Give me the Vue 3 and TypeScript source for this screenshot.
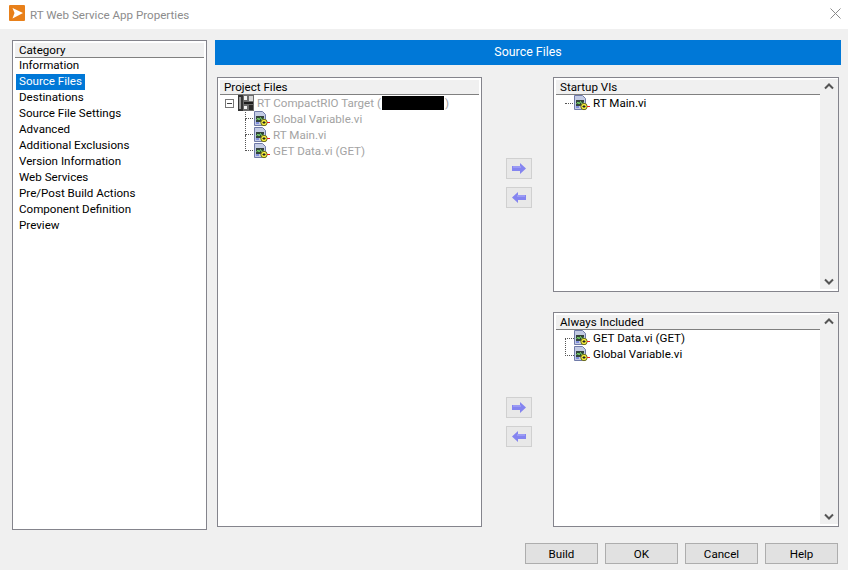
<template>
  <div class="dialog">
    <!-- Title bar -->
    <header class="titlebar">
      <svg class="app-icon" width="16" height="16" viewBox="0 0 16 16">
        <rect width="16" height="16" rx="1" fill="#e8801a" />
        <path d="M3.5 3 L14 8 L3.5 13.5 L5.5 8 Z" fill="#fff" />
      </svg>
      <span class="title">RT Web Service App Properties</span>
      <svg class="close" width="11" height="11" viewBox="0 0 11 11">
        <path d="M.5 .5 L10.5 10.5 M10.5 .5 L.5 10.5" stroke="#8a8a8a" stroke-width="1" fill="none" />
      </svg>
    </header>

    <svg width="0" height="0" class="defs">
      <symbol id="vi" viewBox="0 0 18 16">
        <path d="M1.5 .5 H9.5 L12.5 3.5 V14.5 H1.5 Z" fill="#c3cbe4" stroke="#6f7aa8" />
        <rect x="3" y="5" width="8" height="6" fill="#33433a" />
        <path d="M3.5 9 L5 7 L6 9 L7.5 6.5 L9 9 L10.5 7.5" stroke="#7be06a" fill="none" />
        <path d="M3 12 H6" stroke="#3a4fd0" />
        <circle cx="11" cy="11.5" r="3.2" fill="#f5ee3c" stroke="#6b6b20" />
        <path d="M9.5 11.5 H12.5 M11 10 V13" stroke="#222" />
        <path d="M14 11.5 H17" stroke="#e02020" />
      </symbol>
      <symbol id="arrow" viewBox="0 0 14 11">
        <path d="M0 3 H8 V0 L14 5.5 L8 11 V8 H0 Z" fill="#8484f0" />
        <path d="M1 4 H9" stroke="#b0b0f8" />
      </symbol>
    </svg>

    <div class="body">
      <!-- Category list -->
      <aside class="listbox category">
        <div class="list-head">Category</div>
        <ul class="cat-list">
          <li v-for="c in categories" :key="c" :class="{ active: c === selected }">
            <span>{{ c }}</span>
          </li>
        </ul>
      </aside>

      <main class="page">
        <div class="page-head">Source Files</div>
        <div class="columns">
          <!-- Project tree -->
          <section class="listbox project">
            <div class="list-head">Project Files</div>
            <div class="tree">
              <div class="tree-root">
                <span class="expander"><i></i></span>
                <svg class="target-icon" width="16" height="16" viewBox="0 0 16 16">
                  <rect x="0" y="0" width="16" height="16" fill="#6b6b6b" />
                  <rect x="0" y="0" width="5" height="16" fill="#333" />
                  <rect x="1" y="2" width="2" height="12" fill="#9a9a9a" />
                  <rect x="6" y="1" width="3" height="4" fill="#f2f2f2" />
                  <rect x="11" y="1" width="4" height="5" fill="#d8d8d8" />
                  <rect x="6" y="7" width="9" height="2" fill="#1c1c1c" />
                  <rect x="6" y="11" width="3" height="3" fill="#f2f2f2" />
                  <rect x="11" y="10" width="4" height="5" fill="#2a2a2a" />
                </svg>
                <span class="muted">RT CompactRIO Target (<span class="redact"></span>)</span>
              </div>
              <div v-for="f in projectFiles" :key="f" class="tree-item">
                <svg class="vi" width="18" height="16"><use href="#vi" /></svg>
                <span class="muted">{{ f }}</span>
              </div>
            </div>
          </section>

          <div class="right">
            <div v-for="p in panels" :key="p.title" class="transfer">
              <div class="arrows">
                <button class="arrow-btn"><svg width="14" height="11"><use href="#arrow" /></svg></button>
                <button class="arrow-btn"><svg class="flip" width="14" height="11"><use href="#arrow" /></svg></button>
              </div>
              <section class="listbox side">
                <div class="side-main">
                  <div class="list-head">{{ p.title }}</div>
                  <div class="side-items" :class="{ joined: p.items.length > 1 }">
                    <div v-for="f in p.items" :key="f" class="side-item">
                      <svg class="vi" width="18" height="16"><use href="#vi" /></svg>
                      <span>{{ f }}</span>
                    </div>
                  </div>
                </div>
                <div class="scrollbar">
                  <svg width="10" height="7" viewBox="0 0 10 7"><path d="M1 5.5 L5 1.5 L9 5.5" stroke="#555" stroke-width="2" fill="none" /></svg>
                  <svg width="10" height="7" viewBox="0 0 10 7"><path d="M1 1.5 L5 5.5 L9 1.5" stroke="#555" stroke-width="2" fill="none" /></svg>
                </div>
              </section>
            </div>
          </div>
        </div>
      </main>
    </div>

    <footer class="footer">
      <button v-for="b in buttons" :key="b" class="btn">{{ b }}</button>
    </footer>
  </div>
</template>

<script setup lang="ts">
const categories: string[] = [
  "Information",
  "Source Files",
  "Destinations",
  "Source File Settings",
  "Advanced",
  "Additional Exclusions",
  "Version Information",
  "Web Services",
  "Pre/Post Build Actions",
  "Component Definition",
  "Preview",
];
const selected = "Source Files";

const projectFiles: string[] = ["Global Variable.vi", "RT Main.vi", "GET Data.vi (GET)"];

const panels: { title: string; items: string[] }[] = [
  { title: "Startup VIs", items: ["RT Main.vi"] },
  { title: "Always Included", items: ["GET Data.vi (GET)", "Global Variable.vi"] },
];

const buttons: string[] = ["Build", "OK", "Cancel", "Help"];
</script>

<style>
html,
body {
  margin: 0;
  background: #f0f0f0;
}
</style>

<style scoped>
.dialog {
  width: 848px;
  height: 570px;
  display: flex;
  flex-direction: column;
  background: #f0f0f0;
  font-family: Roboto, "Open Sans", sans-serif;
  font-size: 11.6px;
  color: #000;
  overflow: hidden;
}

.titlebar {
  height: 29px;
  flex: none;
  display: flex;
  align-items: center;
  padding: 0 7px 0 9px;
  background: #fff;
}

.app-icon {
  margin-top: -3px;
}

.title {
  margin-left: 5px;
  color: #8c8c8c;
}

.close {
  margin-left: auto;
  margin-top: -3px;
}

.defs {
  position: absolute;
}

.body {
  flex: 1;
  display: flex;
  gap: 8px;
  padding: 11px 7px 0 12px;
  min-height: 0;
}

.listbox {
  background: #fff;
  border: 1px solid #84848c;
  box-sizing: border-box;
}

.category {
  width: 195px;
  height: 490px;
  flex: none;
  padding: 2px;
}

.list-head {
  height: 14px;
  line-height: 14px;
  padding-left: 4px;
  background: #f0f0f0;
  border-bottom: 1px solid #808080;
}

.cat-list {
  list-style: none;
  margin: 0;
  padding: 0;
}

.cat-list li {
  height: 16px;
  padding-left: 1px;
}

.cat-list li span {
  display: inline-block;
  height: 16px;
  line-height: 15px;
  padding: 0 3px;
}

.cat-list li.active span {
  background: #0078d7;
  color: #fff;
}

.page {
  flex: 1;
  min-width: 0;
}

.page-head {
  height: 25px;
  line-height: 24px;
  font-size: 12.4px;
  background: #0078d7;
  color: #fff;
  text-align: center;
}

.columns {
  display: flex;
  margin: 12px 2px 0;
}

.project {
  width: 265px;
  height: 450px;
  flex: none;
  padding: 2px;
}

.tree {
  padding: 0 0 0 5px;
}

.tree-root,
.tree-item {
  height: 16px;
  display: flex;
  align-items: center;
}

.expander {
  width: 9px;
  height: 9px;
  border: 1px solid #777;
  box-sizing: border-box;
  display: flex;
  align-items: center;
  justify-content: center;
  margin-right: 4px;
}

.expander i {
  width: 5px;
  height: 1px;
  background: #444;
}

.target-icon {
  position: relative;
  z-index: 1;
  background: #fff;
  margin-right: 3px;
}

.muted {
  color: #a3a3a3;
  display: flex;
  align-items: center;
  white-space: pre;
}

.redact {
  display: inline-block;
  width: 62px;
  height: 14px;
  margin: 0 1px;
  background: #000;
}

.tree-item {
  position: relative;
  padding-left: 28px;
}

.tree-item::before {
  content: "";
  position: absolute;
  left: 20px;
  top: -8px;
  height: 16px;
  width: 8px;
  border-left: 1px dotted #555;
  border-bottom: 1px dotted #555;
  box-sizing: border-box;
}

.tree-item .vi {
  position: relative;
  margin-right: 2px;
}

.right {
  flex: 1;
  display: flex;
  flex-direction: column;
  gap: 20px;
}

.transfer {
  height: 215px;
  display: flex;
  align-items: stretch;
}

.arrows {
  width: 71px;
  flex: none;
  display: flex;
  flex-direction: column;
  align-items: center;
  justify-content: center;
  gap: 8px;
  padding: 0 0 3px 2px;
  box-sizing: border-box;
}

.transfer + .transfer .arrows {
  padding: 5px 0 0 2px;
}

.arrow-btn {
  width: 26px;
  height: 21px;
  padding: 0;
  border: 1px solid #d0d0d0;
  background: #e8e8e8;
  display: flex;
  align-items: center;
  justify-content: center;
}

.flip {
  transform: scaleX(-1);
}

.side {
  width: 286px;
  display: flex;
  padding: 2px 0 2px 2px;
}

.side-main {
  flex: 1;
  min-width: 0;
}

.scrollbar {
  width: 18px;
  flex: none;
  margin-top: -1px;
  background: #f0f0f0;
  display: flex;
  flex-direction: column;
  justify-content: space-between;
  align-items: center;
  padding: 4px 0;
  box-sizing: border-box;
}

.side-items {
  padding: 0 0 0 17px;
  position: relative;
}

.side-item {
  height: 16px;
  display: flex;
  align-items: center;
}

.side-item .vi {
  margin-right: 2px;
}

.side-items::before {
  content: "";
  position: absolute;
  left: 9px;
  top: 8px;
  width: 8px;
  border-top: 1px dotted #555;
}

.side-items.joined::before {
  height: 16px;
  border-left: 1px dotted #555;
  border-bottom: 1px dotted #555;
}

.footer {
  flex: none;
  height: 40px;
  display: flex;
  justify-content: flex-end;
  align-items: flex-start;
  gap: 7px;
  padding: 13px 10px 0 0;
  box-sizing: border-box;
}

.btn {
  width: 73px;
  height: 21px;
  padding: 0;
  border: 1px solid #adadad;
  background: #e1e1e1;
  font: inherit;
  color: #000;
}
</style>
